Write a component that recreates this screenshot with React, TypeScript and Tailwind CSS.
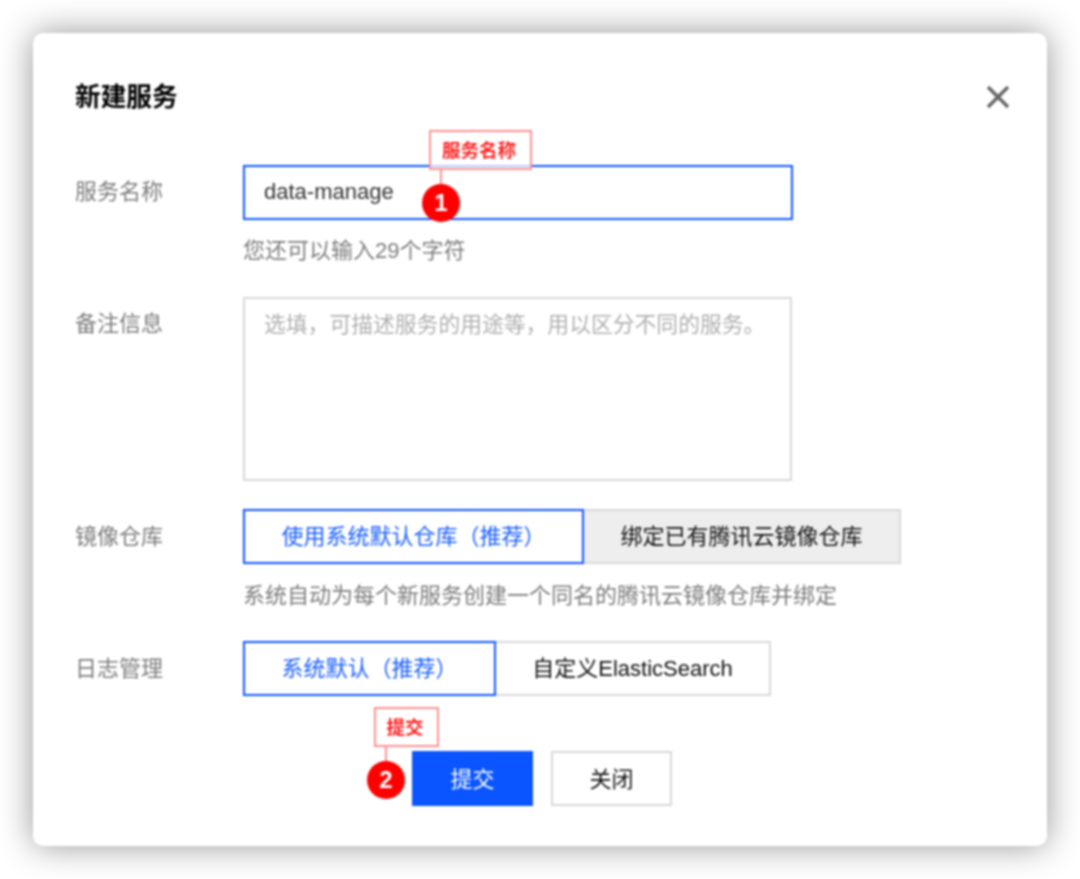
import React from "react";

const font = "font-['Liberation_Sans','Noto_Sans_CJK_SC',sans-serif]";

function Row({ label, children, className = "", labelClass = "leading-[54px]" }: { label: string; children: React.ReactNode; className?: string; labelClass?: string }) {
  return (
    <div className={"flex " + className}>
      <div className={"w-[168px] shrink-0 text-[22px] text-[#7c7c7c] " + labelClass}>{label}</div>
      <div className="flex-1">{children}</div>
    </div>
  );
}

function Hint({ children, className = "mt-[16px]" }: { children: React.ReactNode; className?: string }) {
  return <div className={"text-[22px] leading-[30px] text-[#7c7c7c] " + className}>{children}</div>;
}

function Seg({ text, active, gray, w }: { text: string; active?: boolean; gray?: boolean; w: string }) {
  return (
    <div
      className={
        "flex h-[55px] items-center justify-center text-[22px] " +
        w +
        (active
          ? " relative z-10 border-2 border-[#0f55ff] bg-white text-[#1a5fff]"
          : gray
            ? " -ml-[2px] border-2 border-[#d8d8d8] bg-[#eeeeee] text-[#111111]"
            : " -ml-[2px] border-2 border-[#d8d8d8] bg-white text-[#111111]")
      }
    >
      {text}
    </div>
  );
}

function Callout({ text, n, className }: { text: string; n: number; className: string }) {
  return (
    <div className={"absolute z-20 " + className}>
      <div className="flex h-[40px] items-center justify-center border-2 border-[#ff9090] bg-white/70 pr-[3px] pt-[2px] text-[18.5px] font-bold text-[#ff2020]">
        {text}
      </div>
      <div className="ml-[11px] h-[18px] w-[2px] bg-[#ff9090]" />
      <div className="-ml-[7px] -mt-[4px] flex h-[38px] w-[38px] items-center justify-center rounded-full bg-[#ff0000] font-['Liberation_Sans',sans-serif] text-[24px] font-bold text-white">
        {n}
      </div>
    </div>
  );
}

export default function App() {
  return (
    <div className={"h-[879px] w-[1080px] overflow-hidden bg-white pl-[33px] pt-[33px] blur-[0.8px] " + font}>
      <div className="relative h-[813px] w-[1014px] rounded-[10px] bg-white px-[42px] pt-[46px] shadow-[0_0_34px_rgba(0,0,0,0.42)]">
        <div className="flex h-[36px] items-center justify-between">
          <div className="text-[25.7px] font-bold leading-[36px] text-[#000000]">新建服务</div>
          <svg width="24" height="24" viewBox="0 0 24 24" className="mr-[-5px]">
            <path d="M2 2 L22 22 M22 2 L2 22" stroke="#666666" strokeWidth="3.4" fill="none" />
          </svg>
        </div>

        <Row label="服务名称" className="mt-[50px]">
          <div className="flex h-[55px] w-[550px] items-center border-2 border-[#0f55ff] pb-[2px] pl-[19px] text-[22px] text-[#333333]">
            data-manage
          </div>
          <Hint>您还可以输入29个字符</Hint>
        </Row>

        <Row label="备注信息" className="mt-[31px]">
          <div className="h-[184px] w-[549px] border-2 border-[#d8d8d8] px-[19px] pt-[10px] text-[21.8px] leading-[32px] text-[#b0b0b0]">
            选填，可描述服务的用途等，用以区分不同的服务。
          </div>
        </Row>

        <Row label="镜像仓库" className="mt-[28px]" labelClass="leading-[56px]">
          <div className="flex">
            <Seg text="使用系统默认仓库（推荐）" active w="w-[341px]" />
            <Seg text="绑定已有腾讯云镜像仓库" gray w="w-[319px]" />
          </div>
          <Hint className="mt-[17px]">系统自动为每个新服务创建一个同名的腾讯云镜像仓库并绑定</Hint>
        </Row>

        <Row label="日志管理" className="mt-[30px]" labelClass="leading-[56px]">
          <div className="flex">
            <Seg text="系统默认（推荐）" active w="w-[253px]" />
            <Seg text="自定义ElasticSearch" w="w-[277px]" />
          </div>
        </Row>

        <div className="ml-[337px] mt-[54px] flex gap-[18px]">
          <div className="flex h-[55px] w-[121px] items-center justify-center bg-[#0a55ff] pt-[2px] text-[22px] text-white">提交</div>
          <div className="flex h-[55px] w-[121px] items-center justify-center border-2 border-[#d8d8d8] pt-[2px] text-[22px] text-[#111111]">关闭</div>
        </div>

        <Callout text="服务名称" n={1} className="left-[396px] top-[97px] w-[103px]" />
        <Callout text="提交" n={2} className="left-[341px] top-[674px] w-[65px]" />
      </div>
    </div>
  );
}
